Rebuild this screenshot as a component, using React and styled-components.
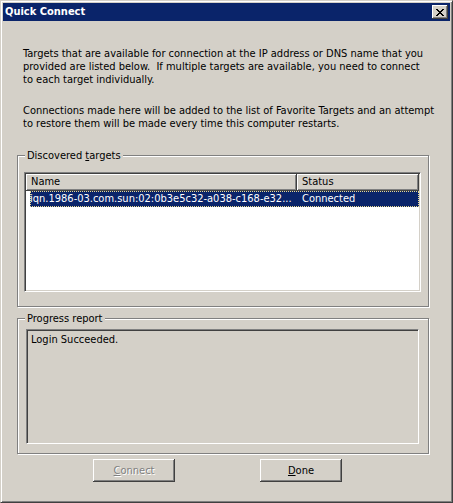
import React from "react";
import styled, { createGlobalStyle } from "styled-components";

const Global = createGlobalStyle`
  html, body { margin: 0; padding: 0; background: #d4d0c8; }
  body { font-family: "DejaVu Sans Condensed", "Liberation Sans", sans-serif; font-size: 11px; color: #000; }
  * { box-sizing: border-box; }
`;

const Window = styled.div`
  width: 453px;
  height: 503px;
  background: #d4d0c8;
  border: 1px solid;
  border-color: #d4d0c8 #404040 #404040 #d4d0c8;
  padding: 2px;
  box-shadow: inset 1px 1px #fff, inset -1px -1px #808080;
  display: flex;
  flex-direction: column;
`;

const TitleBar = styled.div`
  height: 18px;
  background: #0a246a;
  color: #fff;
  font-weight: bold;
  display: flex;
  align-items: center;
  justify-content: space-between;
  padding: 0 2px 0 2px;
`;

const TitleText = styled.span`
  line-height: 18px;
`;

const CloseButton = styled.div`
  width: 16px;
  height: 14px;
  background: #d4d0c8;
  box-shadow: inset -1px -1px #404040, inset 1px 1px #fff, inset -2px -2px #808080;
  display: flex;
  align-items: center;
  justify-content: center;
  padding-right: 1px;
`;

const Body = styled.div`
  flex: 1;
  display: flex;
  flex-direction: column;
`;

const Intro = styled.p`
  margin: ${(p) => p.$top}px 0 0 20px;
  line-height: 13px;
  white-space: nowrap;
`;

const Group = styled.div`
  position: relative;
  margin: ${(p) => p.$top}px 0 0 14px;
  width: 412px;
  border: 1px solid #808080;
  box-shadow: inset 1px 1px #fff, 1px 1px #fff;
  padding: ${(p) => p.$pad};
`;

const Legend = styled.span`
  position: absolute;
  top: -7px;
  left: 7px;
  padding: 0 2px;
  background: #d4d0c8;
  line-height: 13px;
`;

const Sunken = styled.div`
  width: ${(p) => p.$w}px;
  height: ${(p) => p.$h}px;
  background: ${(p) => p.$bg};
  border: 1px solid;
  border-color: #808080 #fff #fff #808080;
  box-shadow: inset 1px 1px #404040, inset -1px -1px #d4d0c8;
  padding: 1px;
  overflow: hidden;
`;

const HeaderRow = styled.div`
  display: flex;
  height: 17px;
`;

const HeaderCell = styled.div`
  width: ${(p) => (p.$w ? `${p.$w}px` : "auto")};
  flex: ${(p) => (p.$w ? "none" : 1)};
  background: #d4d0c8;
  box-shadow: inset -1px -1px #404040, inset 1px 1px #fff, inset -2px -2px #808080;
  padding: 0 0 0 ${(p) => p.$pl}px;
  line-height: 16px;
  white-space: nowrap;
`;

const Row = styled.div`
  display: flex;
  height: 16px;
  margin-left: 4px;
  background: #0a246a;
  color: #fff;
  outline: 1px dotted #e8d890;
  outline-offset: -1px;
  line-height: 16px;
`;

const Cell = styled.div`
  width: ${(p) => (p.$w ? `${p.$w}px` : "auto")};
  flex: ${(p) => (p.$w ? "none" : 1)};
  padding-left: ${(p) => p.$pl}px;
  white-space: nowrap;
  overflow: hidden;
`;

const ReportText = styled.div`
  padding: 2px 0 0 3px;
  line-height: 13px;
`;

const ButtonRow = styled.div`
  display: flex;
  gap: 85px;
  margin: 5px 0 0 90px;
`;

const Button = styled.button`
  width: 82px;
  height: 23px;
  padding: 0;
  border: none;
  background: #d4d0c8;
  font: inherit;
  box-shadow: inset -1px -1px #404040, inset 1px 1px #fff, inset -2px -2px #808080;
  color: ${(p) => (p.disabled ? "#808080" : "#000")};
  text-shadow: ${(p) => (p.disabled ? "1px 1px #fff" : "none")};
  u { text-decoration-thickness: 1px; text-underline-offset: 1px; }
`;

const CloseGlyph = () => (
  <svg width="8" height="7" viewBox="0 0 8 7" shapeRendering="crispEdges">
    {[
      [0, 0, 2], [6, 0, 2],
      [1, 1, 2], [5, 1, 2],
      [2, 2, 4],
      [3, 3, 2],
      [2, 4, 4],
      [1, 5, 2], [5, 5, 2],
      [0, 6, 2], [6, 6, 2],
    ].map(([x, y, w], i) => (
      <rect key={i} x={x} y={y} width={w} height={1} fill="#000" />
    ))}
  </svg>
);

export default function App() {
  return (
    <>
      <Global />
      <Window>
        <TitleBar>
          <TitleText>Quick Connect</TitleText>
          <CloseButton>
            <CloseGlyph />
          </CloseButton>
        </TitleBar>
        <Body>
          <Intro $top={26}>
            Targets that are available for connection at the IP address or DNS name that you
            <br />
            provided are listed below.&nbsp; If multiple targets are available, you need to connect
            <br />
            to each target individually.
          </Intro>
          <Intro $top={18}>
            Connections made here will be added to the list of Favorite Targets and an attempt
            <br />
            to restore them will be made every time this computer restarts.
          </Intro>
          <Group $top={25} $pad="16px 7px 14px 6px">
            <Legend>
              Discovered <u>t</u>argets
            </Legend>
            <Sunken $w={397} $h={120} $bg="#fff">
              <HeaderRow>
                <HeaderCell $w={271} $pl={5}>Name</HeaderCell>
                <HeaderCell $pl={5}>Status</HeaderCell>
              </HeaderRow>
              <Row>
                <Cell $w={267} $pl={0}>iqn.1986-03.com.sun:02:0b3e5c32-a038-c168-e32...</Cell>
                <Cell $pl={5}>Connected</Cell>
              </Row>
            </Sunken>
          </Group>
          <Group $top={11} $pad="10px 9px 9px 8px">
            <Legend>Progress report</Legend>
            <Sunken $w={393} $h={115} $bg="#d4d0c8">
              <ReportText>Login Succeeded.</ReportText>
            </Sunken>
          </Group>
          <ButtonRow>
            <Button disabled>
              <u>C</u>onnect
            </Button>
            <Button>
              <u>D</u>one
            </Button>
          </ButtonRow>
        </Body>
      </Window>
    </>
  );
}
